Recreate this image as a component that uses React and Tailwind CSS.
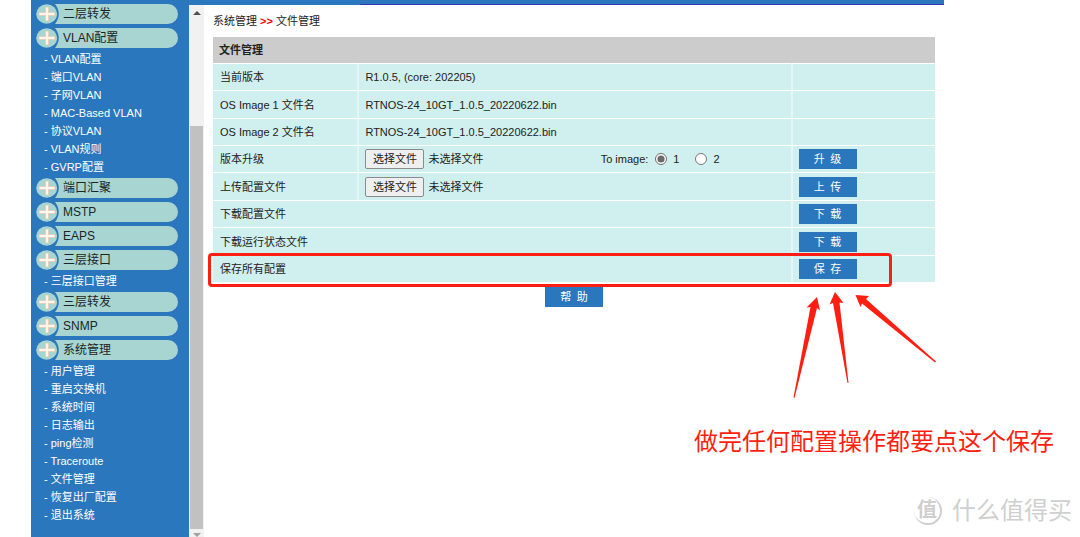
import React, { useState } from 'react';

const menu = [
  { title: '二层转发', items: [] },
  {
    title: 'VLAN配置',
    items: ['VLAN配置', '端口VLAN', '子网VLAN', 'MAC-Based VLAN', '协议VLAN', 'VLAN规则', 'GVRP配置'],
  },
  { title: '端口汇聚', items: [] },
  { title: 'MSTP', items: [] },
  { title: 'EAPS', items: [] },
  { title: '三层接口', items: ['三层接口管理'] },
  { title: '三层转发', items: [] },
  { title: 'SNMP', items: [] },
  {
    title: '系统管理',
    items: ['用户管理', '重启交换机', '系统时间', '日志输出', 'ping检测', 'Traceroute', '文件管理', '恢复出厂配置', '退出系统'],
  },
];

function MenuTitle({ children }) {
  return (
    <button type="button" className="flex h-5 w-full text-left text-xs leading-5 text-[#1c2526]">
      <svg viewBox="0 0 24 20" className="h-5 w-6 shrink-0">
        <path d="M19 0H24V20H19Q26.500 10 19 0Z" fill="#a8d5d1" />
        <ellipse cx="10.700" cy="10" rx="10.500" ry="9.700" fill="#a8d5d1" />
        <path d="M3 10H19M11 3V17" stroke="#e9cfb9" strokeWidth="4" />
        <path d="M3.500 10H18.500M11 3.500V16.500" stroke="#fbf8f4" strokeWidth="2" />
      </svg>
      <span className="h-5 flex-1 rounded-r-full bg-[#a8d5d1] pl-[3px]">{children}</span>
    </button>
  );
}

function Sidebar() {
  return (
    <nav className="w-[158px] shrink-0 bg-[#2b77bd] pt-0.5 pr-[11px] pl-[5px]">
      {menu.map((group) => (
        <div key={group.title}>
          <div className="py-0.5">
            <MenuTitle>{group.title}</MenuTitle>
          </div>
          {group.items.length > 0 && (
            <ul className="pl-2 text-[11px] leading-[18px] text-white">
              {group.items.map((item) => (
                <li key={item}>
                  <a href="#" className="block whitespace-nowrap">- {item}</a>
                </li>
              ))}
            </ul>
          )}
        </div>
      ))}
    </nav>
  );
}

function ScrollBar() {
  return (
    <div className="flex w-[15px] shrink-0 flex-col items-center bg-[#f1f1f1] pt-1.5">
      <svg viewBox="0 0 8 4" className="h-1 w-2">
        <path d="M0 4L4 0L8 4Z" fill="#505050" />
      </svg>
      <div className="mt-[111px] w-[13px] flex-1 bg-[#c1c1c1]" />
      <svg viewBox="0 0 8 4" className="mt-1 h-1 w-2">
        <path d="M0 0L4 4L8 0Z" fill="#a0a0a0" />
      </svg>
    </div>
  );
}

function ActionButton({ children }) {
  return (
    <button type="button" className="block h-5 w-[58px] bg-[#2b77bd] text-[11px] leading-5 text-white">
      {children}
    </button>
  );
}

function FilePicker({ id, label }) {
  return (
    <label htmlFor={id} className="flex items-center gap-1">
      <input id={id} type="file" aria-label={label} className="sr-only" />
      <span className="h-5 w-[59px] rounded-xs border border-[#8b8b8b] bg-[#efefef] text-center leading-[18px]">选择文件</span>
      <span>未选择文件</span>
    </label>
  );
}

function FileTable() {
  const [image, setImage] = useState('1');
  const cell = 'border-t border-white pl-[7px]';
  const mid = 'border-t border-l-2 border-white border-l-[#e4f6f6] pl-1.5';

  return (
    <table className="w-full table-fixed border-separate border-spacing-0 bg-[#d0efef] text-left text-[11px] leading-4 text-[#222]">
      <colgroup>
        <col className="w-1/5" />
        <col className="w-3/5" />
        <col className="w-1/5" />
      </colgroup>
      <thead>
        <tr className="h-[26px]">
          <th colSpan={3} className="bg-[#ccc] pl-1.5 font-bold">文件管理</th>
        </tr>
      </thead>
      <tbody>
        <tr className="h-[27px]">
          <td className={cell}>当前版本</td>
          <td className={mid}>R1.0.5, (core: 202205)</td>
          <td className={mid} />
        </tr>
        <tr className="h-7">
          <td className={cell}>OS Image 1 文件名</td>
          <td className={mid}>RTNOS-24_10GT_1.0.5_20220622.bin</td>
          <td className={mid} />
        </tr>
        <tr className="h-[27px]">
          <td className={cell}>OS Image 2 文件名</td>
          <td className={mid}>RTNOS-24_10GT_1.0.5_20220622.bin</td>
          <td className={mid} />
        </tr>
        <tr className="h-[27px]">
          <td className={cell}>版本升级</td>
          <td className={mid}>
            <div className="flex items-center justify-between pr-[71px]">
              <FilePicker id="upgrade" label="版本升级" />
              <div className="flex items-center">
                <span className="pr-[7px]">To image:</span>
                <input
                  id="image1"
                  type="radio"
                  name="image"
                  className="h-3 w-3 accent-[#6b6b6b]"
                  checked={image === '1'}
                  onChange={() => setImage('1')}
                />
                <label htmlFor="image1" className="pr-4 pl-1.5">1</label>
                <input
                  id="image2"
                  type="radio"
                  name="image"
                  className="h-3 w-3 accent-[#6b6b6b]"
                  checked={image === '2'}
                  onChange={() => setImage('2')}
                />
                <label htmlFor="image2" className="pl-1.5">2</label>
              </div>
            </div>
          </td>
          <td className={mid}><ActionButton>升&ensp;级</ActionButton></td>
        </tr>
        <tr className="h-7">
          <td className={cell}>上传配置文件</td>
          <td className={mid}><FilePicker id="upload" label="上传配置文件" /></td>
          <td className={mid}><ActionButton>上&ensp;传</ActionButton></td>
        </tr>
        <tr className="h-[27px]">
          <td colSpan={2} className={cell}>下载配置文件</td>
          <td className={mid}><ActionButton>下&ensp;载</ActionButton></td>
        </tr>
        <tr className="h-7">
          <td colSpan={2} className={cell}>下载运行状态文件</td>
          <td className={mid}><ActionButton>下&ensp;载</ActionButton></td>
        </tr>
        <tr className="h-[27px]">
          <td colSpan={2} className={cell}>保存所有配置</td>
          <td className={mid}><ActionButton>保&ensp;存</ActionButton></td>
        </tr>
      </tbody>
    </table>
  );
}

/* Red marks drawn over the page, anchored to the save row */
function Annotations() {
  return (
    <>
      <div className="pointer-events-none absolute right-[43px] -bottom-[5px] -left-[5px] h-[34px] rounded border-3 border-[#ff1f12]" />
      <svg viewBox="0 0 150 115" className="pointer-events-none absolute top-full -right-1 mt-1.5 h-[115px] w-[150px]" fill="#ff1f12">
        <path d="M28 9L17.500 19.500L21.500 19L4.500 109.500L5.500 110L28 20L31 22.500Z" />
        <path d="M46 4L40.500 16.500L44 15L58.500 95H59.500L50.500 14.500L54.500 15Z" />
        <path d="M66.500 7L71.500 19L73 15.500L146 74.500L147 73.500L77 11L80 8Z" />
      </svg>
      <p className="absolute top-full -right-[119px] mt-36 text-2xl leading-8 whitespace-nowrap text-[#ff1f12]">
        做完任何配置操作都要点这个保存
      </p>
    </>
  );
}

function Watermark() {
  return (
    <div className="absolute right-2 bottom-2 flex items-center gap-2.5 text-2xl leading-9 text-[#cfcfcf]">
      <span className="flex h-7 w-7 items-center justify-center rounded-full border-r-2 border-b-2 border-[#cfcfcf] text-xl font-bold">
        值
      </span>
      <span>什么值得买</span>
    </div>
  );
}

export default function App() {
  return (
    <div className="relative min-h-screen overflow-hidden bg-white pr-[136px] pl-[31px] font-['Liberation_Sans','Noto_Sans_CJK_SC',sans-serif]">
      <div className="flex min-h-screen">
        <Sidebar />
        <div className="flex min-w-0 flex-1 flex-col">
          <header className="flex h-[5px]">
            <div className="w-[171px] bg-[#2b77bd]" />
            <div className="flex-1 border-b border-[#3538b8] bg-[#2b77bd]" />
          </header>
          <div className="flex flex-1">
            <ScrollBar />
            <main className="min-w-0 flex-1 px-[9px] pt-2">
              <div className="pb-2 text-[11px] leading-4 text-[#222]">
                系统管理 <b className="text-[#ff0000]">&gt;&gt;</b> 文件管理
              </div>
              <div className="relative">
                <FileTable />
                <Annotations />
              </div>
              <div className="flex justify-center pt-[5px]">
                <ActionButton>帮&ensp;助</ActionButton>
              </div>
            </main>
          </div>
        </div>
      </div>
      <Watermark />
    </div>
  );
}
